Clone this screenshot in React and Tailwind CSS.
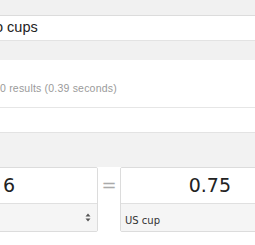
export default function App(){
  return (
    <div className="w-[255px] h-[245px] overflow-hidden bg-white" style={{fontFamily:'"Liberation Sans", Arial, sans-serif'}}>
      <div className="h-[16px] bg-[#f1f1f1] border-b border-[#dcdcdc]"></div>

      <div className="h-[24px] flex items-center whitespace-nowrap text-[14.5px] text-[#222]">
        <span className="-ml-[5px]">o cups</span>
      </div>

      <div className="h-[20px] bg-[#f1f1f1] border-t border-[#e3e3e3]"></div>

      <div className="h-[47px] pt-[21px] whitespace-nowrap text-[10.5px] text-[#9a9a9a] tracking-[0.2px]">
        0 results (0.39 seconds)
      </div>

      <div className="h-[25px] border-t border-[#e6e6e6]"></div>

      <div className="h-[35px] bg-[#f2f2f2] border-t border-[#e3e3e3]"></div>

      <div className="flex items-start whitespace-nowrap">
        <div className="-ml-[10px] w-[108px] shrink-0 border border-[#dcdcdc] rounded-[2px] overflow-hidden">
          <div className="h-[35px] bg-white flex items-center pl-[12px] text-[19px] text-[#222]" style={{fontFamily:'"DejaVu Sans", sans-serif'}}>6</div>
          <div className="h-[28px] bg-[#f5f5f5] border-t border-[#e0e0e0] flex items-center justify-end pr-[6px]">
            <svg width="6" height="9" viewBox="0 0 6 9">
              <path d="M3 0.5 L5.5 3.5 L0.5 3.5 Z" fill="#555"/>
              <path d="M3 8.5 L5.5 5.5 L0.5 5.5 Z" fill="#555"/>
            </svg>
          </div>
        </div>
        <div className="w-[22px] shrink-0 h-[35px] flex items-center justify-center text-[18px] text-[#aaa]" style={{fontFamily:'"DejaVu Sans", sans-serif'}}>=</div>
        <div className="w-[140px] shrink-0 border border-[#dcdcdc] rounded-[2px] overflow-hidden">
          <div className="h-[35px] bg-white flex items-center justify-end pr-[28px] text-[19px] text-[#222]" style={{fontFamily:'"DejaVu Sans", sans-serif'}}>0.75</div>
          <div className="h-[28px] bg-[#f5f5f5] border-t border-[#e0e0e0] flex items-center pl-[4px] pt-[6px] text-[10px] text-[#333]" style={{fontFamily:'"DejaVu Sans", sans-serif'}}>US cup</div>
        </div>
      </div>
    </div>
  )
}
